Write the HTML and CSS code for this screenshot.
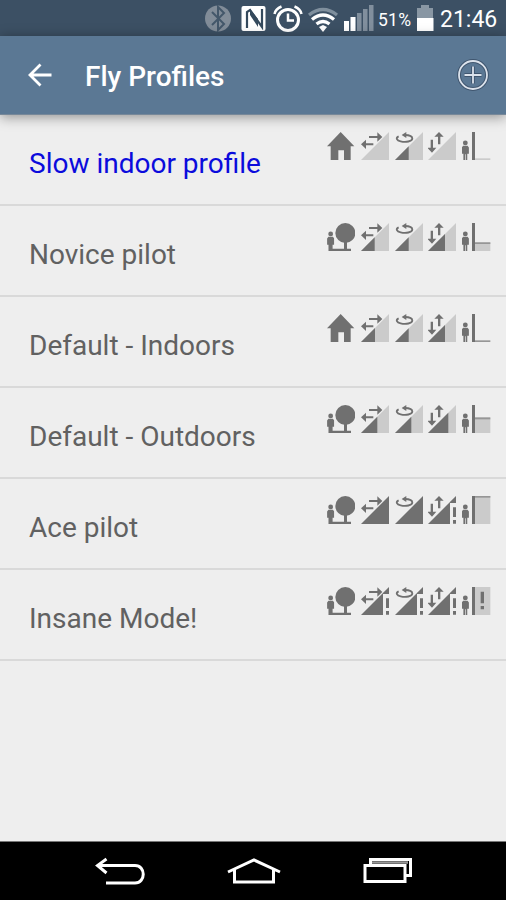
FILE: index.html
```html
<!DOCTYPE html>
<html lang="en">
<head>
<meta charset="utf-8">
<title>Fly Profiles</title>
<link rel="stylesheet" href="styles.css">
</head>
<body>
<svg class="defs" aria-hidden="true">
  <symbol id="person" viewBox="0 0 22 62"><circle cx="11" cy="9" r="7.500"/><path d="M4 18h14l4 5v20h-5v19h-5V44h-2v18H5V43H0V23z"/></symbol>
  <symbol id="home" viewBox="0 0 84 84"><path d="M41 0 82 43H71V84H51V55H34V84H11V43H0z"/></symbol>
  <symbol id="outdoor" viewBox="0 0 84 84"><circle cx="55" cy="30" r="30"/><path d="M51 55h9v22h12v7H5V54h9v23h37z"/><use href="#person" x="0" y="24" width="22" height="60"/></symbol>
  <symbol id="strafe" viewBox="0 0 84 84"><path d="M24 12h25V1l15 14-15 14V18H24zM0 37l15-14v11h22v6H15v11z"/></symbol>
  <symbol id="rotate" viewBox="0 0 84 84"><path class="line" d="M11 13C1 18 5 25 17 28c16 4 34 0 35-8 0-7-9-11-23-11"/><path d="M34 0v18L20 9z"/></symbol>
  <symbol id="climb" viewBox="0 0 84 84"><path d="M33 0 47 14H37V37H30V14H19zM8 23h7v24h10L12 62-2 47H8z"/></symbol>
  <symbol id="over" viewBox="0 0 84 84"><path d="M0 84 66 18V84zM65 19 84 0V21H65zM75 34h9v29h-9zM75 72h9v11h-9z"/></symbol>
  <symbol id="wall" viewBox="0 0 84 84"><use href="#person" x="-1" y="24" width="22" height="60"/><path d="M30 0h9v84h-9z"/></symbol>
</svg>
<div class="screen">
  <header class="status">
    <svg class="status-icons" viewBox="0 0 235 36">
      <circle cx="13" cy="18.500" r="13" fill="#818c98"/>
      <path d="m7 12 12 12-6 6V7l6 6L7 25" fill="none" stroke="#43576a" stroke-width="2"/>
      <rect x="36.500" y="6" width="24" height="25" rx="2" fill="#fff"/>
      <path d="M42 28V12l3-2 12 17V9" fill="none" stroke="#34495c" stroke-width="2.200"/><path d="M45 9v6l8 12v-8z" fill="#34495c"/>
      <g fill="none" stroke="#fff" stroke-width="3"><circle cx="83" cy="20" r="10.500"/><path d="M83 13.500v7h6M69.500 14q1-5 7-7.500M96.500 14q-1-5-7-7.500" stroke-width="2.500"/></g>
      <g fill="none" stroke="#fff" stroke-width="3.300"><path d="M104 15q14-11 28 0" stroke="#7f8f9d"/><path d="M107 19.500q11-9 22 0M111.500 24q6.500-5 13 0"/></g><path d="m114 27 4-2 4 2-4 5z" fill="#fff"/>
      <path d="M139 21h5v10h-5zM145.500 17h5v14h-5z" fill="#fff"/><path d="M152 13h4.500v18H152zM158 9h4.500v22H158zM164 5h4.500v26H164z" fill="#818f9d"/>
      <text x="173" y="25.500" font-size="17.500" textLength="33">51%</text>
      <path d="M216 5h8v3h4v11h-16V8h4z" fill="#8997a4"/><path d="M212 18h16.500v13H212z" fill="#fff"/>
    </svg>
    <time>21:46</time>
  </header>
  <nav class="toolbar">
    <svg class="back" viewBox="0 0 24 24"><path d="M23.500 12H2M12.500 1.500 2 12l10.500 10.500"/></svg>
    <h1>Fly Profiles</h1>
    <svg class="add" viewBox="0 0 34 34"><circle class="halo" cx="17" cy="17" r="14"/><path class="halo" d="M17 8.500v17M8.500 17h17"/><circle cx="17" cy="17" r="14"/><path d="M17 8.500v17M8.500 17h17"/></svg>
  </nav>
  <main class="list">
    <section class="row selected"><span>Slow indoor profile</span><div class="icons">
      <svg viewBox="0 0 84 84"><use href="#home"/></svg>
      <svg viewBox="0 0 84 84"><path class="pale" d="M0 84 84 0V84z"/><use href="#strafe"/></svg>
      <svg viewBox="0 0 84 84"><path class="pale" d="M0 84 84 0V84z"/><path d="M0 84 41 43V84z"/><use href="#rotate"/></svg>
      <svg viewBox="0 0 84 84"><path class="pale" d="M0 84 84 0V84z"/><use href="#climb"/></svg>
      <svg viewBox="0 0 84 84"><path class="pale" d="M38 79h47v5H38z"/><use href="#wall"/></svg>
    </div></section>
    <section class="row"><span>Novice pilot</span><div class="icons">
      <svg viewBox="0 0 84 84"><use href="#outdoor"/></svg>
      <svg viewBox="0 0 84 84"><path class="pale" d="M0 84 84 0V84z"/><path d="M0 84 41 43V84z"/><use href="#strafe"/></svg>
      <svg viewBox="0 0 84 84"><path class="pale" d="M0 84 84 0V84z"/><path d="M0 84 41 43V84z"/><use href="#rotate"/></svg>
      <svg viewBox="0 0 84 84"><path class="pale" d="M0 84 84 0V84z"/><path d="M0 84 51 33V84z"/><use href="#climb"/></svg>
      <svg viewBox="0 0 84 84"><path class="pale" d="M38 58h47v26H38z"/><path class="mid" d="M38 58h47v5H38z"/><use href="#wall"/></svg>
    </div></section>
    <section class="row"><span>Default - Indoors</span><div class="icons">
      <svg viewBox="0 0 84 84"><use href="#home"/></svg>
      <svg viewBox="0 0 84 84"><path class="pale" d="M0 84 84 0V84z"/><path d="M0 84 42 42V84z"/><use href="#strafe"/></svg>
      <svg viewBox="0 0 84 84"><path class="pale" d="M0 84 84 0V84z"/><path d="M0 84 41 43V84z"/><use href="#rotate"/></svg>
      <svg viewBox="0 0 84 84"><path class="pale" d="M0 84 84 0V84z"/><path d="M0 84 51 33V84z"/><use href="#climb"/></svg>
      <svg viewBox="0 0 84 84"><path class="mid" d="M38 79h47v5H38z"/><use href="#wall"/></svg>
    </div></section>
    <section class="row"><span>Default - Outdoors</span><div class="icons">
      <svg viewBox="0 0 84 84"><use href="#outdoor"/></svg>
      <svg viewBox="0 0 84 84"><path class="pale" d="M0 84 84 0V84z"/><path d="M0 84 49 35V84z"/><use href="#strafe"/></svg>
      <svg viewBox="0 0 84 84"><path class="pale" d="M0 84 84 0V84z"/><path d="M0 84 49 35V84z"/><use href="#rotate"/></svg>
      <svg viewBox="0 0 84 84"><path class="pale" d="M0 84 84 0V84z"/><path d="M0 84 61 23V84z"/><use href="#climb"/></svg>
      <svg viewBox="0 0 84 84"><path class="pale" d="M38 40h47v44H38z"/><path class="mid" d="M38 37h47v6H38z"/><use href="#wall"/></svg>
    </div></section>
    <section class="row"><span>Ace pilot</span><div class="icons">
      <svg viewBox="0 0 84 84"><use href="#outdoor"/></svg>
      <svg viewBox="0 0 84 84"><path d="M0 84 84 0V84z"/><use href="#strafe"/></svg>
      <svg viewBox="0 0 84 84"><path d="M0 84 84 0V84z"/><use href="#rotate"/></svg>
      <svg viewBox="0 0 84 84"><use href="#over"/><use href="#climb"/></svg>
      <svg viewBox="0 0 84 84"><path class="pale" d="M38 0h47v84H38z"/><path class="mid" d="M38 0h47v5H38z"/><use href="#wall"/></svg>
    </div></section>
    <section class="row"><span>Insane Mode!</span><div class="icons">
      <svg viewBox="0 0 84 84"><use href="#outdoor"/></svg>
      <svg viewBox="0 0 84 84"><use href="#over"/><use href="#strafe"/></svg>
      <svg viewBox="0 0 84 84"><use href="#over"/><use href="#rotate"/></svg>
      <svg viewBox="0 0 84 84"><use href="#over"/><use href="#climb"/></svg>
      <svg viewBox="0 0 84 84"><path class="pale" d="M38 0h47v84H38z"/><path d="M56 14h10v35H56zM56 57h10v10H56z"/><use href="#wall"/></svg>
    </div></section>
  </main>
  <footer class="navbar">
    <svg viewBox="0 0 350 58">
      <path d="M18 23.500h37c11 0 11 17.500 0 17.500H26M26.500 17 17.500 23.500 26.500 31"/>
      <path d="M148 30 174 18l26 12M154.500 28v12h39V28"/>
      <path d="M285 23.500h40v16h-40z"/><path d="M290.500 22v-4.500h40v16h-5"/><path class="shade" d="M292 20.500h36"/>
    </svg>
  </footer>
</div>
</body>
</html>
```
FILE: styles.css
```css
* { box-sizing: border-box; }
body { margin: 0; font-family: Roboto, "Liberation Sans", sans-serif; }
.defs { display: none; }
.screen { width: 506px; height: 900px; display: flex; flex-direction: column; background: #eee; overflow: hidden; }
.status { height: 36px; flex: none; display: flex; align-items: center; padding-left: 205px; background: #3c5064; color: #fff; }
.status-icons { width: 235px; height: 36px; fill: #fff; }
.status time { font-size: 23px; line-height: 36px; padding-top: 3px; white-space: nowrap; }
.toolbar { height: 79px; flex: none; display: flex; align-items: center; padding: 0 16px 0 28px; background: #5b7894; border-bottom: 1px solid #778899; box-shadow: 0 2px 12px rgba(0, 0, 0, .4); color: #fff; }
.back { width: 24px; height: 24px; fill: none; stroke: #fff; stroke-width: 2.8; }
.toolbar h1 { flex: 1; margin: 4px 0 0 33px; font-size: 28px; font-weight: 500; line-height: 36px; }
.add { width: 34px; height: 34px; fill: none; stroke: #dce3ec; stroke-width: 1.8; }
.add .halo { stroke: #40566f; stroke-width: 3.8; }
.list { flex: 1; }
.row { height: 91px; display: flex; justify-content: space-between; padding: 0 16px 0 29px; border-bottom: 2px solid #d9d9d9; color: #616161; font-size: 28px; }
.row span { line-height: 97px; white-space: nowrap; }
.row.selected span { color: #0b0bdc; }
.icons { display: flex; gap: 5.75px; padding-top: 16.5px; }
.icons svg { width: 28px; height: 28px; fill: #707070; overflow: visible; }
.icons symbol { overflow: visible; }
.icons .pale { fill: #cbcbcb; }
.icons .mid { fill: #969696; }
.line { fill: none; stroke: #707070; stroke-width: 5.5; }
.navbar { height: 59px; flex: none; background: #000; border-top: 1px solid #777; padding-left: 80px; }
.navbar svg { width: 350px; height: 58px; display: block; fill: none; stroke: #fff; stroke-width: 3; }
.navbar .shade { stroke: #999; stroke-width: 2.5; }
```
